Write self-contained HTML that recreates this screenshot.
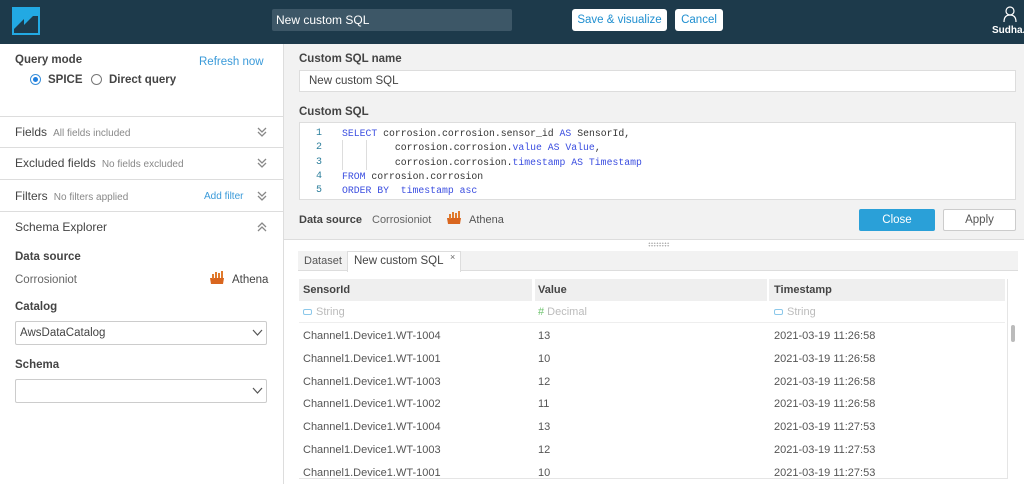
<!DOCTYPE html>
<html><head><style>
*{box-sizing:border-box;margin:0;padding:0}
body{width:1024px;height:484px;overflow:hidden;font-family:"Liberation Sans",sans-serif;font-size:11px;color:#444;background:#fff;position:relative}
.a{position:absolute;white-space:nowrap}
.b{font-weight:bold;color:#444}
.g{color:#888;font-size:10px}
.code{font-family:"Liberation Mono",monospace;font-size:9.8px;color:#333}
.kw{color:#3b4ee0}
.hr{position:absolute;left:0;width:283px;height:1px;background:#ddd}
.chev{position:absolute;left:257px;width:10px;height:10px}
.sel{position:absolute;left:15px;width:252px;height:24px;border:1px solid #ccc;background:#fff;border-radius:2px}
.row{position:absolute;left:299px;width:706px;height:1px;background:#eee}
</style></head><body>
<!-- header -->
<div class="a" style="left:0;top:0;width:1024px;height:44px;background:#1d3a4b"></div>
<svg class="a" style="left:12px;top:7px" width="28" height="28" viewBox="0 0 28 28"><rect width="28" height="28" fill="#22a9e3"/><path d="M2 26 L2 22 L12 12 L12 18 L21 9 L26 9 L26 26 Z" fill="#1d3a4b"/><rect x="1" y="1" width="26" height="26" fill="none" stroke="#22a9e3" stroke-width="2"/></svg>
<div class="a" style="left:272px;top:9px;width:240px;height:22px;background:#3d5767;border-radius:2px;color:#fff;font-size:12px;padding:4px 4px">New custom SQL</div>
<div class="a" style="left:572px;top:9px;width:95px;height:22px;background:#fff;border-radius:3px;color:#1f8fd0;font-size:11.5px;text-align:center;line-height:22px">Save &amp; visualize</div>
<div class="a" style="left:675px;top:9px;width:48px;height:22px;background:#fff;border-radius:3px;color:#1f8fd0;font-size:11.5px;text-align:center;line-height:22px">Cancel</div>
<svg class="a" style="left:1003px;top:6px" width="14" height="16" viewBox="0 0 14 16"><circle cx="7" cy="5" r="4" fill="none" stroke="#fff" stroke-width="1.2"/><path d="M1 16 Q1 9 7 9 Q13 9 13 16" fill="none" stroke="#fff" stroke-width="1.2"/></svg>
<div class="a" style="left:992px;top:25px;color:#fff;font-size:10px;font-weight:bold">Sudha..</div>

<!-- left panel -->
<div class="a" style="left:283px;top:44px;width:1px;height:440px;background:#ddd"></div>
<div class="a b" style="left:15px;top:54px;font-size:11.5px">Query mode</div>
<div class="a" style="left:199px;top:56px;color:#3a9ad9;font-size:11.5px">Refresh now</div>
<div class="a" style="left:30px;top:74px;width:11px;height:11px;border:1px solid #3a8fd9;border-radius:50%"><div style="margin:2px;width:5px;height:5px;border-radius:50%;background:#1f7fe0"></div></div>
<div class="a b" style="left:48px;top:74px;font-size:11.5px">SPICE</div>
<div class="a" style="left:91px;top:74px;width:11px;height:11px;border:1px solid #777;border-radius:50%"></div>
<div class="a b" style="left:109px;top:74px;font-size:11.5px">Direct query</div>
<div class="hr" style="top:116px"></div>
<div class="a" style="left:15px;top:125px;font-size:12px">Fields <span class="g">&nbsp;All fields included</span></div>
<div class="hr" style="top:147px"></div>
<div class="a" style="left:15px;top:156px;font-size:12px">Excluded fields <span class="g">&nbsp;No fields excluded</span></div>
<div class="hr" style="top:179px"></div>
<div class="a" style="left:15px;top:189px;font-size:12px">Filters <span class="g">&nbsp;No filters applied</span></div>
<div class="a" style="left:204px;top:191px;color:#3a9ad9;font-size:10px">Add filter</div>
<div class="hr" style="top:211px"></div>
<div class="a" style="left:15px;top:220px;font-size:12px">Schema Explorer</div>
<svg class="chev" style="top:127px" viewBox="0 0 10 10"><path d="M1 1 L5 5 L9 1 M1 5 L5 9 L9 5" fill="none" stroke="#888" stroke-width="1.3"/></svg>
<svg class="chev" style="top:158px" viewBox="0 0 10 10"><path d="M1 1 L5 5 L9 1 M1 5 L5 9 L9 5" fill="none" stroke="#888" stroke-width="1.3"/></svg>
<svg class="chev" style="top:191px" viewBox="0 0 10 10"><path d="M1 1 L5 5 L9 1 M1 5 L5 9 L9 5" fill="none" stroke="#888" stroke-width="1.3"/></svg>
<svg class="chev" style="top:222px" viewBox="0 0 10 10"><path d="M1 5 L5 1 L9 5 M1 9 L5 5 L9 9" fill="none" stroke="#888" stroke-width="1.3"/></svg>
<div class="a b" style="left:15px;top:251px;font-size:11.5px">Data source</div>
<div class="a" style="left:15px;top:274px;color:#666;font-size:11.5px">Corrosioniot</div>
<svg class="a" style="left:209px;top:271px" width="16" height="14" viewBox="0 0 16 14"><path d="M1 7 H15 L14 13 H2 Z" fill="#d9661f"/><rect x="3" y="3" width="2" height="5" fill="#e07a2c"/><rect x="6" y="1" width="2" height="6" fill="#e07a2c"/><rect x="9" y="2" width="2" height="5" fill="#e07a2c"/><rect x="12" y="0" width="2" height="7" fill="#e07a2c"/></svg>
<div class="a" style="left:232px;top:274px;font-size:11.5px">Athena</div>
<div class="a b" style="left:15px;top:301px;font-size:11.5px">Catalog</div>
<div class="sel" style="top:321px"><span style="position:absolute;left:4px;top:5px;font-size:11.5px;color:#444">AwsDataCatalog</span></div>
<svg class="a" style="left:252px;top:329px" width="11" height="8" viewBox="0 0 11 8"><path d="M1 1 L5.5 6 L10 1" fill="none" stroke="#555" stroke-width="1.2"/></svg>
<div class="a b" style="left:15px;top:359px;font-size:11.5px">Schema</div>
<div class="sel" style="top:379px"></div>
<svg class="a" style="left:252px;top:387px" width="11" height="8" viewBox="0 0 11 8"><path d="M1 1 L5.5 6 L10 1" fill="none" stroke="#555" stroke-width="1.2"/></svg>

<!-- right top -->
<div class="a" style="left:284px;top:44px;width:740px;height:196px;background:#f2f2f2;border-bottom:1px solid #ddd"></div>
<div class="a b" style="left:299px;top:53px;font-size:11.5px">Custom SQL name</div>
<div class="a" style="left:299px;top:70px;width:717px;height:22px;background:#fff;border:1px solid #ddd;padding:4px 9px;font-size:11.5px">New custom SQL</div>
<div class="a b" style="left:299px;top:106px;font-size:11.5px">Custom SQL</div>
<div class="a" style="left:299px;top:122px;width:717px;height:78px;background:#fff;border:1px solid #ddd"></div>
<div class="a" style="left:342px;top:140px;width:1px;height:30px;background:#ddd"></div>
<div class="a" style="left:366px;top:140px;width:1px;height:30px;background:#ddd"></div>
<div class="a code" style="left:316px;top:127px;line-height:14.3px;color:#2d7f9c;font-size:10px">1<br>2<br>3<br>4<br>5</div>
<div class="a code" style="left:342px;top:127px;line-height:14.3px;white-space:pre"><span class="kw">SELECT</span> corrosion.corrosion.sensor_id <span class="kw">AS</span> SensorId,
         corrosion.corrosion.<span class="kw">value AS Value</span>,
         corrosion.corrosion.<span class="kw">timestamp AS Timestamp</span>
<span class="kw">FROM</span> corrosion.corrosion
<span class="kw">ORDER BY  timestamp asc</span></div>
<div class="a b" style="left:299px;top:214px;font-size:11px">Data source</div>
<div class="a" style="left:372px;top:214px;color:#666;font-size:11px">Corrosioniot</div>
<svg class="a" style="left:446px;top:211px" width="16" height="14" viewBox="0 0 16 14"><path d="M1 7 H15 L14 13 H2 Z" fill="#d9661f"/><rect x="3" y="3" width="2" height="5" fill="#e07a2c"/><rect x="6" y="1" width="2" height="6" fill="#e07a2c"/><rect x="9" y="2" width="2" height="5" fill="#e07a2c"/><rect x="12" y="0" width="2" height="7" fill="#e07a2c"/></svg>
<div class="a" style="left:469px;top:214px;color:#555;font-size:11px">Athena</div>
<div class="a" style="left:859px;top:209px;width:76px;height:22px;background:#2aa0d8;border-radius:2px;color:#fff;text-align:center;line-height:22px;font-size:11.5px">Close</div>
<div class="a" style="left:943px;top:209px;width:73px;height:22px;background:#fff;border:1px solid #ccc;border-radius:2px;color:#555;text-align:center;line-height:20px;font-size:11.5px">Apply</div>
<div class="a" style="left:648px;top:242px;width:22px;height:5px;background-image:radial-gradient(#aaa 40%,transparent 45%);background-size:2.7px 2.5px"></div>

<!-- tabs -->
<div class="a" style="left:298px;top:251px;width:720px;height:20px;background:#f2f2f2;border-bottom:1px solid #ddd"></div>
<div class="a" style="left:304px;top:255px;color:#555;font-size:11px">Dataset</div>
<div class="a" style="left:347px;top:251px;width:114px;height:21px;background:#fff;border:1px solid #ddd;border-bottom:none"></div>
<div class="a" style="left:354px;top:255px;color:#444;font-size:11.5px">New custom SQL</div>
<div class="a" style="left:450px;top:252px;color:#666;font-size:9px">×</div>

<!-- table -->
<div class="a" style="left:299px;top:279px;width:233px;height:22px;background:#efefef"></div>
<div class="a" style="left:535px;top:279px;width:232px;height:22px;background:#efefef"></div>
<div class="a" style="left:769px;top:279px;width:236px;height:22px;background:#efefef"></div>
<div class="a b" style="left:303px;top:284px;font-size:11px">SensorId</div>
<div class="a b" style="left:538px;top:284px;font-size:11px">Value</div>
<div class="a b" style="left:774px;top:284px;font-size:11px">Timestamp</div>
<div class="a" style="left:1007px;top:279px;width:1px;height:200px;background:#e5e5e5"></div>
<div class="a" style="left:299px;top:478px;width:708px;height:1px;background:#e5e5e5"></div>
<div class="a" style="left:1011px;top:325px;width:4px;height:17px;background:#bbb;border-radius:2px"></div>
<div class="a" style="left:303px;top:306px;color:#bbb;font-size:11px"><span style="display:inline-block;width:9px;height:6px;border:1px solid #8cc8ea;border-radius:2px;margin-right:4px"></span>String</div>
<div class="a" style="left:538px;top:306px;color:#bbb;font-size:11px"><span style="color:#6cc26c">#</span> Decimal</div>
<div class="a" style="left:774px;top:306px;color:#bbb;font-size:11px"><span style="display:inline-block;width:9px;height:6px;border:1px solid #8cc8ea;border-radius:2px;margin-right:4px"></span>String</div>
<div class="row" style="top:322px"></div>
<div class="a" style="left:303px;top:325px;line-height:22.8px;color:#555;font-size:11px">Channel1.Device1.WT-1004<br>Channel1.Device1.WT-1001<br>Channel1.Device1.WT-1003<br>Channel1.Device1.WT-1002<br>Channel1.Device1.WT-1004<br>Channel1.Device1.WT-1003<br>Channel1.Device1.WT-1001</div>
<div class="a" style="left:538px;top:325px;line-height:22.8px;color:#555;font-size:11px">13<br>10<br>12<br>11<br>13<br>12<br>10</div>
<div class="a" style="left:774px;top:325px;line-height:22.8px;color:#555;font-size:11px">2021-03-19 11:26:58<br>2021-03-19 11:26:58<br>2021-03-19 11:26:58<br>2021-03-19 11:26:58<br>2021-03-19 11:27:53<br>2021-03-19 11:27:53<br>2021-03-19 11:27:53</div>
</body></html>
